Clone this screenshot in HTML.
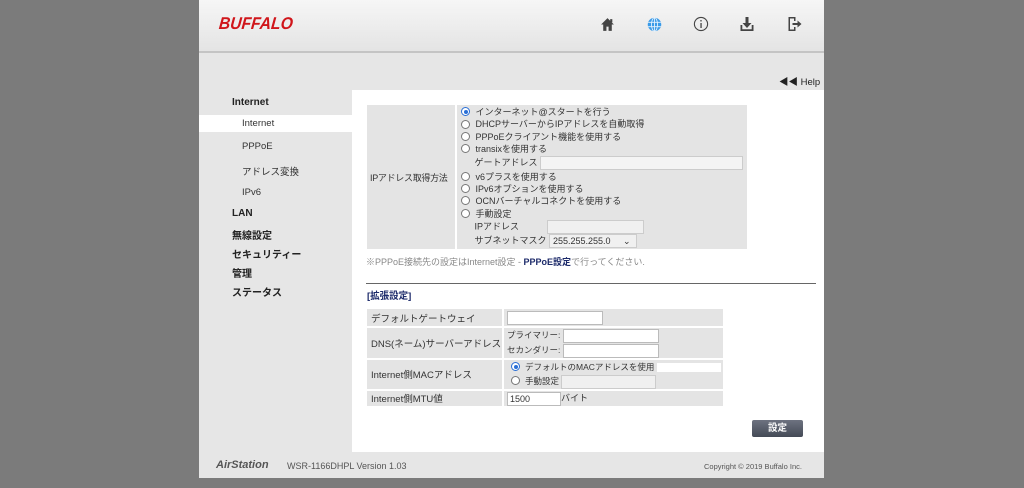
<!DOCTYPE html>
<html><head><meta charset="utf-8"><style>
*{margin:0;padding:0;box-sizing:border-box}
body{width:1024px;height:488px;background:#7b7b7b;font-family:"Liberation Sans","Noto Sans CJK JP",sans-serif;color:#333;position:relative;overflow:hidden;font-size:9px}
.a{position:absolute}
#page{left:199px;top:0;width:625px;height:478px;background:#e6e6e6}
#hdr{left:0;top:0;width:625px;height:53px;background:linear-gradient(#f6f6f6,#e4e4e4);border-bottom:2px solid #c4c4c4}
.logo{left:20px;top:14px;font:italic 900 17px "Liberation Sans",sans-serif;color:#d0161b;transform:scaleX(.92) skewX(-6deg);transform-origin:left}
.nav{font-size:10px;font-weight:bold;color:#222}
.sub{font-size:9.5px;color:#333}
#panel{left:153px;top:90px;width:472px;height:362px;background:#fff}
table{border-collapse:collapse}
td{background:#e4e4e4;border:2px solid #fff;vertical-align:middle;white-space:nowrap}
.inp{display:inline-block;background:#fff;border:1px solid #bbb;height:14px;vertical-align:middle}
.ginp{display:inline-block;background:#f0f0f0;border:1px solid #ccc;height:14px;vertical-align:middle}
.rad{display:inline-block;width:9px;height:9px;border:1px solid #777;border-radius:50%;background:#fff;vertical-align:middle;margin-right:5px;position:relative;top:-1px}
.rad.on{border-color:#2a6fd6}
.rad.on:after{content:"";position:absolute;left:1.5px;top:1.5px;width:4px;height:4px;border-radius:50%;background:#2a6fd6}
.ln{height:12.4px;line-height:12.4px;white-space:nowrap}
</style></head><body>
<div id="page" class="a">
 <div id="hdr" class="a">
  <div class="a logo">BUFFALO</div>
  <svg class="a" style="left:401px;top:17px" width="15" height="15" viewBox="0 0 14 14"><path d="M7 1L1 7h2v6h3V9h2v4h3V7h2z" fill="#444"/><rect x="9.5" y="2" width="2" height="3" fill="#444"/></svg>
  <svg class="a" style="left:448px;top:17px" width="15" height="15" viewBox="0 0 14 14"><circle cx="7" cy="7" r="6.3" fill="#3a9be8"/><g stroke="#e8f3fd" stroke-width=".8" fill="none"><ellipse cx="7" cy="7" rx="2.8" ry="6.3"/><path d="M1 5h12M1 9h12M7 .7v12.6"/></g></svg>
  <svg class="a" style="left:494px;top:16px" width="16" height="16" viewBox="0 0 16 16"><circle cx="8" cy="8" r="6.6" fill="none" stroke="#444" stroke-width="1.1"/><rect x="7.4" y="7" width="1.3" height="5" fill="#444"/><circle cx="8" cy="4.8" r=".8" fill="#444"/></svg>
  <svg class="a" style="left:540px;top:16px" width="16" height="16" viewBox="0 0 15 16"><path d="M6 1h3v6h3l-4.5 5L3 7h3z" fill="#444"/><path d="M1 9v6h13V9h-1.8v4.2H2.8V9z" fill="#444"/></svg>
  <svg class="a" style="left:588px;top:16px" width="16" height="16" viewBox="0 0 15 16"><path d="M1 1h7v4H6.5V2.5H2.5v11h4V11H8v4H1z" fill="#444"/><path d="M5 7h5V4.5L14 8l-4 3.5V9H5z" fill="#444"/></svg>
 </div>
 <div class="a" style="left:580px;top:74px;font-size:9.5px;color:#222">◀◀ Help</div>
 <div class="a nav" style="left:33px;top:97px">Internet</div>
 <div class="a" style="left:0;top:115px;width:153px;height:17px;background:#fff"></div>
 <div class="a sub" style="left:43px;top:118px">Internet</div>
 <div class="a sub" style="left:43px;top:141px">PPPoE</div>
 <div class="a sub" style="left:43px;top:164px">アドレス変換</div>
 <div class="a sub" style="left:43px;top:187px">IPv6</div>
 <div class="a nav" style="left:33px;top:208px">LAN</div>
 <div class="a nav" style="left:33px;top:227px">無線設定</div>
 <div class="a nav" style="left:33px;top:246px">セキュリティー</div>
 <div class="a nav" style="left:33px;top:265px">管理</div>
 <div class="a nav" style="left:33px;top:284px">ステータス</div>
 <div id="panel" class="a"></div>
 <div class="a" style="left:17px;top:459px;font:italic bold 11px 'Liberation Sans',sans-serif;color:#555">AirStation</div>
 <div class="a" style="left:88px;top:461px;font-size:9px;color:#555">WSR-1166DHPL Version 1.03</div>
 <div class="a" style="left:505px;top:462px;font-size:7.5px;color:#555">Copyright © 2019 Buffalo Inc.</div>
</div>

<table class="a" style="left:365px;top:103px;width:384px">
<tr><td style="width:92px;height:146px;padding-left:3px;font-size:9px;letter-spacing:-.3px">IPアドレス取得方法</td>
<td style="padding:1px 4px">
<div class="ln"><span class="rad on"></span>インターネット@スタートを行う</div>
<div class="ln"><span class="rad"></span>DHCPサーバーからIPアドレスを自動取得</div>
<div class="ln"><span class="rad"></span>PPPoEクライアント機能を使用する</div>
<div class="ln"><span class="rad"></span>transixを使用する</div>
<div class="ln" style="height:15px;padding-left:13px">ゲートアドレス <span class="ginp" style="width:203px;background:#f4f4f4"></span></div>
<div class="ln"><span class="rad"></span>v6プラスを使用する</div>
<div class="ln"><span class="rad"></span>IPv6オプションを使用する</div>
<div class="ln"><span class="rad"></span>OCNバーチャルコネクトを使用する</div>
<div class="ln"><span class="rad"></span>手動設定</div>
<div class="ln" style="height:14px;padding-left:13px">IPアドレス <span class="ginp" style="width:97px;margin-left:25px"></span></div>
<div class="ln" style="height:14px;padding-left:13px">サブネットマスク <span class="ginp" style="width:88px;font-size:9px;line-height:12px;padding-left:3px">255.255.255.0 &nbsp; &nbsp; ⌄</span></div>
</td></tr></table>
<div class="a" style="left:366px;top:255px;font-size:9px;color:#888">※PPPoE接続先の設定はInternet設定 - <b style="color:#1c2a6a">PPPoE設定</b>で行ってください.</div>
<div class="a" style="left:366px;top:283px;width:450px;height:1px;background:#666"></div>
<div class="a" style="left:367px;top:288px;font-size:9.5px;font-weight:bold;color:#1c2a6a">[拡張設定]</div>
<table class="a" style="left:365px;top:307px;width:360px;font-size:9.5px">
<tr><td style="width:137px;height:19px;padding-left:4px">デフォルトゲートウェイ</td><td style="padding-left:3px"><span class="inp" style="width:96px"></span></td></tr>
<tr><td style="height:32px;padding-left:4px">DNS(ネーム)サーバーアドレス</td><td style="padding-left:3px;font-size:8.5px;line-height:15px">プライマリー: <span class="inp" style="width:96px"></span><br>セカンダリー: <span class="inp" style="width:96px"></span></td></tr>
<tr><td style="height:30px;padding-left:4px">Internet側MACアドレス</td><td style="padding-left:7px;font-size:8.5px;line-height:14px"><span class="rad on"></span>デフォルトのMACアドレスを使用 <span style="display:inline-block;width:64px;height:9px;background:#fff;vertical-align:middle"></span><br><span class="rad"></span>手動設定 <span class="ginp" style="width:95px"></span></td></tr>
<tr><td style="height:17px;padding-left:4px">Internet側MTU値</td><td style="padding-left:3px;font-size:9px"><span class="inp" style="width:54px;line-height:12px;padding-left:2px">1500</span>バイト</td></tr>
</table>
<div class="a" style="left:752px;top:420px;width:51px;height:17px;background:linear-gradient(#6d7280,#444a56);border-radius:2px;color:#fff;font-size:9.5px;font-weight:bold;text-align:center;line-height:17px">設定</div>
</body></html>
